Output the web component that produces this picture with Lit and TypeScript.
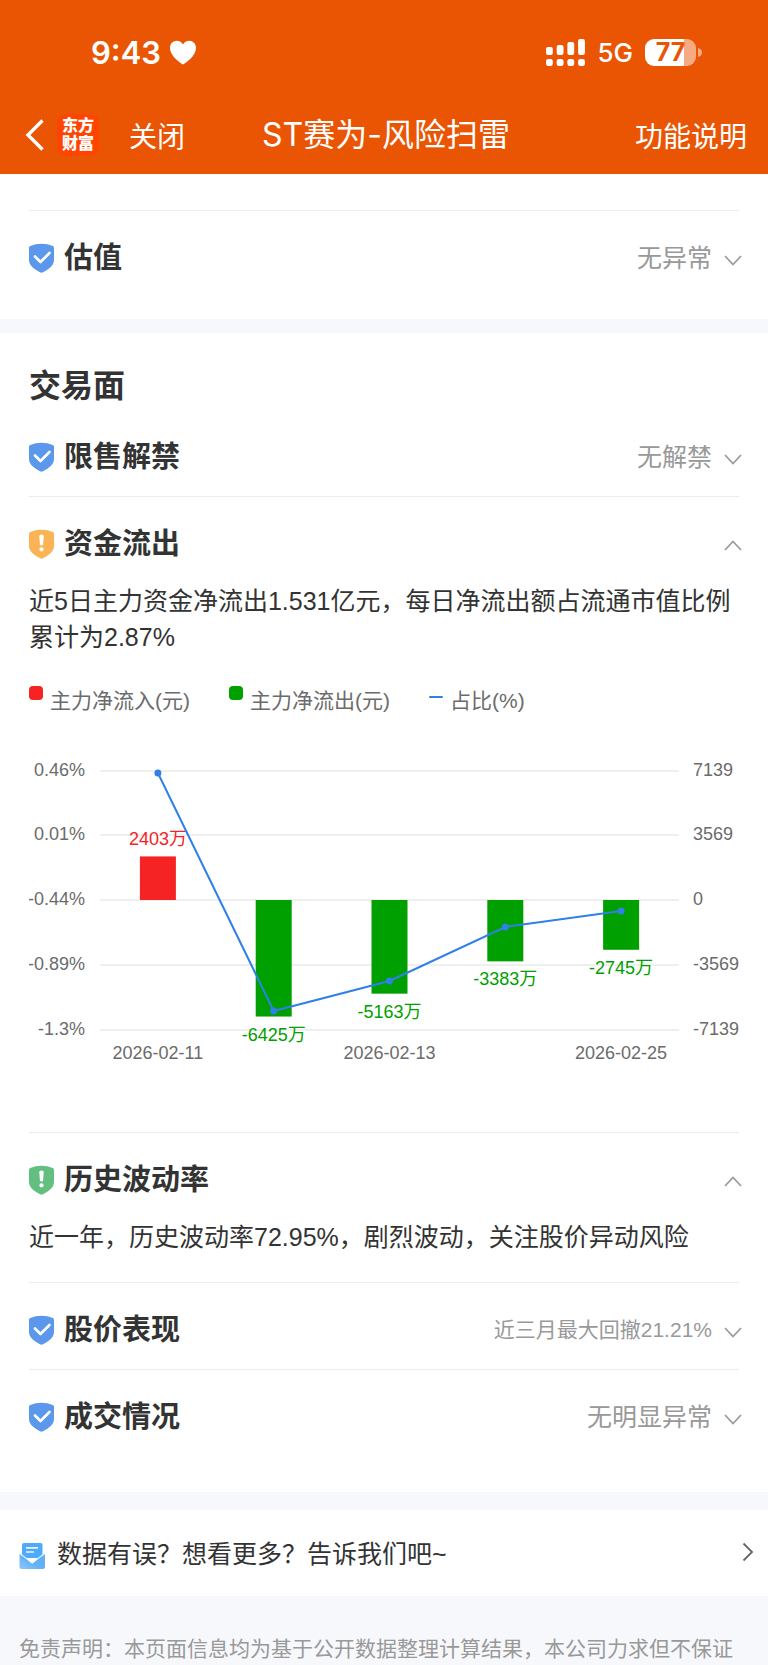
import { LitElement, html, svg, css, nothing } from "lit";
import { customElement, property } from "lit/decorators.js";

type Level = "safe" | "warn" | "notice";

const LEVEL_COLOR: Record<Level, string> = {
  safe: "#5b98eb",
  warn: "#fbb455",
  notice: "#62bf80",
};

interface Flow {
  date: string;
  amount: number;
  ratio: number;
}

const FLOWS: Flow[] = [
  { date: "2026-02-11", amount: 2403, ratio: 0.446 },
  { date: "2026-02-12", amount: -6425, ratio: -1.171 },
  { date: "2026-02-13", amount: -5163, ratio: -0.967 },
  { date: "2026-02-24", amount: -3383, ratio: -0.6 },
  { date: "2026-02-25", amount: -2745, ratio: -0.491 },
];

@customElement("flow-chart")
class FlowChart extends LitElement {
  static styles = css`
    :host {
      display: block;
    }
    .chart {
      display: block;
      width: 100%;
      height: auto;
      font-family: "Liberation Sans", "Noto Sans CJK SC", sans-serif;
      font-size: 18px;
    }
    .grid {
      stroke: #efefef;
      stroke-width: 2;
    }
    .axis {
      fill: #6b6b6b;
    }
    .in {
      fill: #f52323;
    }
    .out {
      fill: #00a000;
    }
    .line {
      fill: none;
      stroke: #2f80e7;
      stroke-width: 2;
    }
    .dot {
      fill: #2f80e7;
    }
  `;

  render() {
    const left = 71;
    const right = 650;
    const top = 55;
    const bottom = 314;
    const max = 7139;
    const hi = 0.46;
    const lo = -1.3;
    const ratios = ["0.46%", "0.01%", "-0.44%", "-0.89%", "-1.3%"];
    const amounts = ["7139", "3569", "0", "-3569", "-7139"];
    const rowY = (i: number) => Math.floor(top + ((bottom - top) * i) / 4);
    const zero = rowY(2);
    const x = (i: number) => left + ((right - left) * (i + 0.5)) / FLOWS.length;
    const barY = (v: number) => zero - (v / max) * ((bottom - top) / 2);
    const lineY = (v: number) => top + ((hi - v) / (hi - lo)) * (bottom - top);
    return html`<svg class="chart" viewBox="0 0 710 416" role="img" aria-label="主力资金净流入流出与占比">
      ${ratios.map(
        (r, i) => svg`
          <line class="grid" x1=${left} x2=${right} y1=${rowY(i)} y2=${rowY(i)}></line>
          <text class="axis" x="56" y=${rowY(i) + 5} text-anchor="end">${r}</text>
          <text class="axis" x="664" y=${rowY(i) + 5}>${amounts[i]}</text>`
      )}
      ${FLOWS.map((f, i) => {
        const up = f.amount > 0;
        const end = barY(f.amount);
        return svg`
          <rect class=${up ? "in" : "out"} x=${x(i) - 18} width="36" y=${Math.min(end, zero)} height=${Math.abs(end - zero)}></rect>
          <text class=${up ? "in" : "out"} x=${x(i)} y=${up ? end - 11 : end + 24} text-anchor="middle">${f.amount}万</text>
          ${i % 2 === 0
            ? svg`<text class="axis" x=${x(i)} y="343" text-anchor="middle">${f.date}</text>`
            : nothing}`;
      })}
      <polyline class="line" points=${FLOWS.map((f, i) => `${x(i)},${lineY(f.ratio)}`).join(" ")}></polyline>
      ${FLOWS.map((f, i) => svg`<circle class="dot" cx=${x(i)} cy=${lineY(f.ratio)} r="3.5"></circle>`)}
    </svg>`;
  }
}

@customElement("risk-item")
class RiskItem extends LitElement {
  @property() heading = "";
  @property() level: Level = "safe";
  @property() note = "";
  @property({ type: Boolean }) small = false;
  @property({ type: Boolean }) open = false;

  static styles = css`
    :host {
      display: block;
      border-top: 1px solid #ececec;
    }
    :host([plain]) {
      border-top: 0;
    }
    .heading {
      margin: 0;
      font: inherit;
    }
    .row {
      display: flex;
      align-items: center;
      width: 100%;
      padding: 32px 0 24px;
      border: 0;
      background: none;
      font: inherit;
      line-height: 30px;
      text-align: left;
      color: #333;
      cursor: pointer;
    }
    .shield {
      flex: none;
      width: 25px;
      height: 30px;
      margin-right: 10px;
    }
    .name {
      flex: 1;
      font-size: 29px;
      font-weight: 700;
    }
    .note {
      font-size: 25px;
      color: #999;
    }
    .note.small {
      font-size: 21px;
    }
    .arrow {
      flex: none;
      width: 20px;
      height: 30px;
      margin: 0 -4px 0 11px;
    }
  `;

  private toggle() {
    this.open = !this.open;
  }

  render() {
    const mark =
      this.level === "safe"
        ? svg`<path d="M6 13.5l5.5 5.5 9-9" fill="none" stroke="#fff" stroke-width="2.6" stroke-linecap="round" stroke-linejoin="round"></path>`
        : svg`<path d="M10.3 7.2q0-1.7 2.2-1.7t2.2 1.7l-.6 8q-.1 1.3-1.6 1.3t-1.6-1.3z" fill="#fff"></path><circle cx="12.5" cy="20.3" r="2.1" fill="#fff"></circle>`;
    return html`
      <h3 class="heading">
        <button class="row" type="button" aria-expanded=${this.open} @click=${this.toggle}>
          <svg class="shield" viewBox="0 0 25 30" aria-hidden="true">
            <path
              d="M1.2 3Q6.5.7 12.5.7T23.8 3Q25 3.5 25 4.800V16.500Q25 21 21.500 24.300Q18.500 27 14 29.300Q12.500 30 11 29.300Q6.500 27 3.500 24.300Q0 21 0 16.500V4.800Q0 3.500 1.200 3z"
              fill=${LEVEL_COLOR[this.level]}
            ></path>
            ${mark}
          </svg>
          <span class="name">${this.heading}</span>
          <span class="note ${this.small ? "small" : ""}">${this.note}</span>
          <svg class="arrow" viewBox="0 0 20 30" aria-hidden="true">
            <path
              d=${this.open ? "M2 21l8-8.500 8 8.500" : "M2 13l8 8.500 8-8.500"}
              fill="none"
              stroke="#999"
              stroke-width="1.7"
            ></path>
          </svg>
        </button>
      </h3>
      ${this.open ? html`<slot></slot>` : nothing}
    `;
  }
}

@customElement("app-root")
class AppRoot extends LitElement {
  static styles = css`
    :host {
      display: block;
      min-height: 100vh;
      background: #f7f8fb;
      color: #333;
      font-family: "Liberation Sans", "Noto Sans CJK SC", sans-serif;
    }
    .top {
      padding-bottom: 8px;
      background: #ea5504;
      color: #fff;
    }
    .status {
      display: flex;
      align-items: center;
      justify-content: space-between;
      height: 104px;
      padding: 0 66px 0 91px;
      font-family: Inter, sans-serif;
    }
    .clock,
    .signals {
      display: flex;
      align-items: center;
    }
    .clock {
      gap: 9px;
      font-size: 31px;
      font-weight: 600;
    }
    .signals {
      gap: 12px;
      font-size: 26px;
      font-weight: 500;
    }
    .battery {
      display: flex;
      align-items: center;
      gap: 2px;
    }
    .charge {
      width: 51px;
      border-radius: 9px;
      background: linear-gradient(90deg, #fff 77%, #f5aa82 77%);
      color: #ea5504;
      font-size: 25px;
      font-weight: 700;
      line-height: 27px;
      text-align: center;
    }
    .icon {
      display: block;
      flex: none;
    }
    .nav {
      display: grid;
      grid-template-columns: 1fr auto 1fr;
      align-items: center;
      height: 62px;
      padding: 0 21px 0 25px;
    }
    .side {
      display: flex;
      align-items: center;
    }
    .plain {
      padding: 0;
      border: 0;
      background: none;
      color: inherit;
      font: inherit;
      font-size: 28px;
      cursor: pointer;
    }
    .logo {
      display: grid;
      place-content: center;
      width: 42px;
      height: 42px;
      margin: 0 30px 0 13px;
      border-radius: 9px;
      background: #ff4400;
      font-size: 16px;
      font-weight: 900;
      line-height: 18px;
    }
    .title {
      margin: 0;
      font-family: Inter, "Noto Sans CJK SC", sans-serif;
      font-size: 32px;
      font-weight: 400;
      line-height: 40px;
    }
    .end {
      justify-self: end;
    }
    .card {
      padding: 0 29px;
      background: #fff;
    }
    .first {
      padding-top: 36px;
      padding-bottom: 22px;
      margin-bottom: 14px;
    }
    .trade {
      padding-top: 29px;
      padding-bottom: 36px;
      margin-bottom: 18px;
    }
    .section {
      margin: 0;
      font-size: 32px;
      font-weight: 700;
      line-height: 48px;
    }
    .text {
      margin: 0;
      font-size: 25px;
      line-height: 36px;
    }
    .text.last {
      padding-bottom: 27px;
    }
    .legend {
      display: flex;
      gap: 39px;
      margin: 31px 0 0;
      padding: 0;
      list-style: none;
      color: #6b6b6b;
      font-size: 21px;
      line-height: 30px;
    }
    .key {
      display: flex;
      gap: 7px;
    }
    .swatch {
      width: 14px;
      height: 14px;
      border-radius: 4px;
    }
    .red {
      background: #f52323;
    }
    .green {
      background: #00a000;
    }
    .dash {
      height: 2px;
      margin-top: 10px;
      background: #2f80e7;
    }
    .feedback {
      display: flex;
      align-items: center;
      gap: 11px;
      height: 84px;
      padding: 0 14px 2px 19px;
      background: #fff;
      color: #333;
      font-size: 25px;
      text-decoration: none;
    }
    .ask {
      flex: 1;
    }
    .legal {
      margin: 0;
      padding: 37px 19px 0;
      color: #999;
      font-size: 21px;
      line-height: 32px;
    }
  `;

  render() {
    return html`
      <header class="top">
        <div class="status">
          <div class="clock">
            <span>9:43</span>
            <svg class="icon" width="26" height="25" viewBox="0 0 26 25" aria-hidden="true">
              <path d="M13 24.500C10.500 23 0 16.500 0 7.800 0 3.600 3 .7 6.800.7c2.700 0 5 1.400 6.200 3.700C14.200 2.100 16.500.7 19.200.7 23 .7 26 3.600 26 7.800c0 8.700-10.500 15.200-13 16.700z" fill="#fff"></path>
            </svg>
          </div>
          <div class="signals">
            <svg class="icon" width="39" height="27" viewBox="0 0 39 27" fill="#fff" aria-hidden="true">
              ${[8, 6, 3, 0].map(
                (y, i) => svg`
                  <rect x=${i * 10.7} y=${y} width="6.800" height=${16 - y} rx="2"></rect>
                  <rect x=${i * 10.7} y="20" width="6.800" height="7" rx="2.200"></rect>`
              )}
            </svg>
            <span>5G</span>
            <div class="battery">
              <div class="charge">77</div>
              <svg class="icon" width="4" height="9" viewBox="0 0 4 9" aria-hidden="true">
                <path d="M0 0q4 1 4 4.500T0 9z" fill="#f5aa82"></path>
              </svg>
            </div>
          </div>
        </div>
        <nav class="nav">
          <div class="side">
            <button class="plain" type="button" aria-label="返回">
              <svg class="icon" width="19" height="32" viewBox="0 0 19 32" aria-hidden="true">
                <path d="M17.500 1.500L3 16l14.500 14.500" fill="none" stroke="#fff" stroke-width="3.400"></path>
              </svg>
            </button>
            <div class="logo"><span>东方</span><span>财富</span></div>
            <button class="plain" type="button">关闭</button>
          </div>
          <h1 class="title">ST赛为-风险扫雷</h1>
          <button class="plain end" type="button">功能说明</button>
        </nav>
      </header>

      <main>
        <section class="card first">
          <risk-item heading="估值" note="无异常"></risk-item>
        </section>

        <section class="card trade">
          <h2 class="section">交易面</h2>
          <risk-item plain heading="限售解禁" note="无解禁"></risk-item>
          <risk-item heading="资金流出" level="warn" open>
            <p class="text">近5日主力资金净流出1.531亿元，每日净流出额占流通市值比例累计为2.87%</p>
            <ul class="legend">
              <li class="key"><span class="swatch red"></span>主力净流入(元)</li>
              <li class="key"><span class="swatch green"></span>主力净流出(元)</li>
              <li class="key"><span class="swatch dash"></span>占比(%)</li>
            </ul>
            <flow-chart></flow-chart>
          </risk-item>
          <risk-item heading="历史波动率" level="notice" open>
            <p class="text last">近一年，历史波动率72.95%，剧烈波动，关注股价异动风险</p>
          </risk-item>
          <risk-item heading="股价表现" note="近三月最大回撤21.21%" small></risk-item>
          <risk-item heading="成交情况" note="无明显异常"></risk-item>
        </section>

        <a class="feedback" href="#feedback">
          <svg class="icon" width="27" height="34" viewBox="0 0 27 34" aria-hidden="true">
            <defs>
              <linearGradient id="mail" x1="0" y1="1" x2="1" y2="0">
                <stop offset="0" stop-color="#8cc9fa"></stop>
                <stop offset=".5" stop-color="#63b0f5"></stop>
                <stop offset="1" stop-color="#63b0f5"></stop>
              </linearGradient>
            </defs>
            <path d="M3 10q0-2 2-2h16.500q2 0 2 2v13H3z" fill="#50aafa"></path>
            <path d="M.5 18.500l12.700 10.200L26 18.500V32q0 2-2 2H2.500q-2 0-2-2z" fill="url(#mail)"></path>
            <path d="M3 20.300V23l10.200 5L23.500 23v-2.700l-10.300 8.200z" fill="#50aafa"></path>
            <path d="M.8 18.500l12.400 9.500 12.500-9.500" fill="none" stroke="#e4f3ff" stroke-width="1.200"></path>
            <path d="M7 12.800h12M7 17h8" fill="none" stroke="#e4f3ff" stroke-width="1.700"></path>
          </svg>
          <span class="ask">数据有误？想看更多？告诉我们吧~</span>
          <svg class="icon" width="12" height="20" viewBox="0 0 12 20" aria-hidden="true">
            <path d="M1.500 1.500L10 10l-8.500 8.500" fill="none" stroke="#666" stroke-width="1.800"></path>
          </svg>
        </a>
      </main>

      <footer>
        <p class="legal">免责声明：本页面信息均为基于公开数据整理计算结果，本公司力求但不保证</p>
      </footer>
    `;
  }
}
